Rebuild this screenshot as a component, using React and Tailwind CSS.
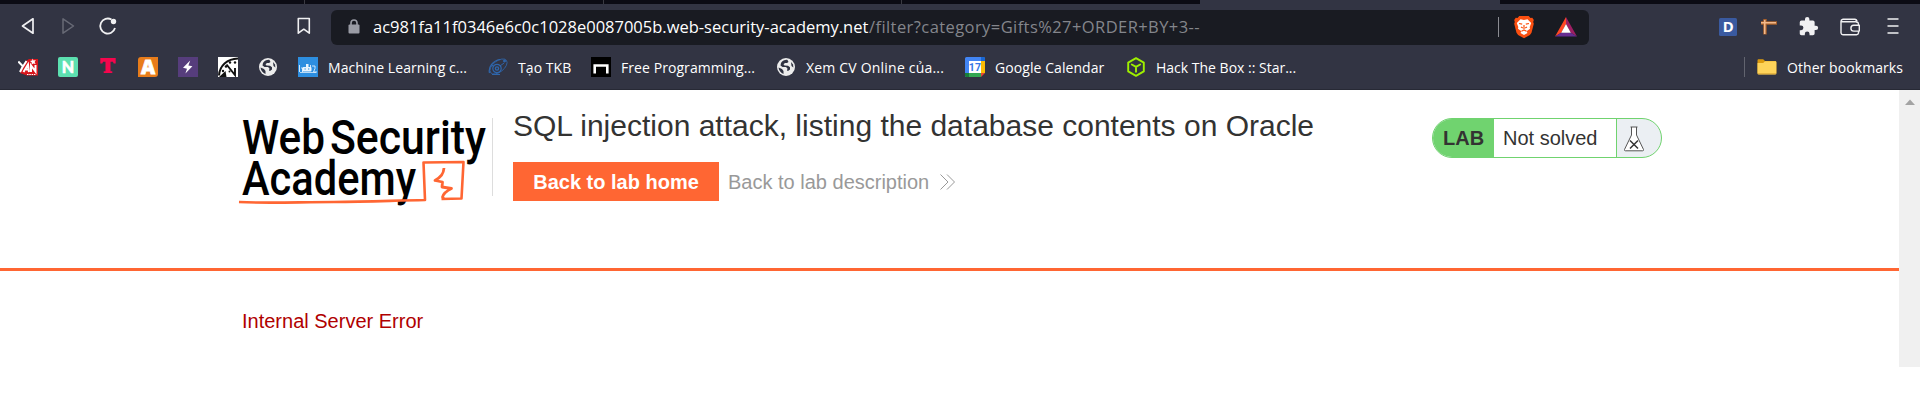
import React from "react";

function Bolt() {
  return (
    <svg viewBox="0 0 20 20" className="size-5 shrink-0">
      <rect width="20" height="20" fill="#563d7c" />
      <path d="M12.2 3.6 5 10.8l4 .9-1.6 4.8 7-7.2-4-.8z" fill="#fff" />
    </svg>
  );
}

function Yan() {
  return (
    <svg viewBox="0 0 20 20" className="size-5 shrink-0">
      <path d="M8 4l3-2h9v16.500H9L2 16l3-7z" fill="#d8161c" />
      <path d="M.3 4.500 5 9.500 8.500 4M5 9l-3 6M5.500 15 10 7.500l1 7.500M8 12.500h3M13 15V8.500l4.500 6V8" stroke="#fff" strokeWidth="2" fill="none" />
      <path d="M14.500 1.500l1 2 2.300-.5-1.200 2 1 2-2.200-.6-1.800 1.200.2-2.200-1.800-1.400 2.200-.4z" fill="#fff" />
      <path d="M9 17.500h9" stroke="#fff" strokeWidth="1" strokeDasharray="1.500 .8" />
    </svg>
  );
}

function LetterN() {
  return (
    <svg viewBox="0 0 20 20" className="size-5 shrink-0">
      <rect width="20" height="20" rx="2" fill="#5ce0b0" />
      <text x="10" y="15.600" textAnchor="middle" fontSize="16" fontWeight="900" fill="#fff" stroke="#fff" strokeWidth=".6" fontFamily="Lato, sans-serif">N</text>
    </svg>
  );
}

function LetterT() {
  return (
    <svg viewBox="0 0 20 20" className="size-5 shrink-0">
      <path d="M2.300 1h15.400v5.600h-2l-.8-1.800h-2.400v9.400h1.800V16H5.700v-1.800h1.800V4.800H5.100l-.8 1.800h-2z" fill="#f5064d" />
    </svg>
  );
}

function LetterA() {
  return (
    <svg viewBox="0 0 20 20" className="size-5 shrink-0">
      <path d="M3 0h17v17a3 3 0 0 1-3 3H0V3a3 3 0 0 1 3-3z" fill="#e87c1a" />
      <text x="10" y="16.600" textAnchor="middle" fontSize="19.500" fontWeight="800" fill="#fff" stroke="#fff" strokeWidth=".8" fontFamily="Open Sans, sans-serif">A</text>
    </svg>
  );
}

function Gauge() {
  return (
    <svg viewBox="0 0 20 20" className="size-5 shrink-0">
      <rect width="20" height="20" fill="#fff" />
      <path d="M1 18.500C1.500 9 9 1.800 20 1.500" fill="none" stroke="#111" strokeWidth="2" />
      <path d="M8.500 7.500 17 18V11" fill="none" stroke="#111" strokeWidth="1.900" />
      <path d="M1 20l6.500-6 1 6z" fill="#111" />
      <circle cx="12" cy="5.500" r="1.200" fill="#111" />
      <circle cx="17" cy="5.500" r="1.200" fill="#111" />
      <circle cx="8" cy="9.500" r="1.300" fill="#111" />
      <circle cx="5" cy="14" r="1.200" fill="#111" />
      <circle cx="11.500" cy="14.500" r="1" fill="#111" />
    </svg>
  );
}

function Globe() {
  return (
    <svg viewBox="0 0 20 20" className="size-5 shrink-0">
      <circle cx="10" cy="10" r="9" fill="#ececec" />
      <path d="M11.500 3c-2-.6-5 .8-6.500 3l-.5 2.500 2 1.500h3.500l1.500 1.500-.5 2 1 .5 2-1.500v-2.200l-2-1.500-3.500-.3-1-1.300 1.500-1.200h2l1.500-1z" fill="#2f3241" />
      <path d="M2.500 10.500 6 12l1.500 2v3C5 16 2.800 13.500 2.500 10.500z" fill="#2f3241" />
      <path d="M15 5l2 2.500.4 3L15.500 9z" fill="#2f3241" />
    </svg>
  );
}

function Course() {
  return (
    <svg viewBox="0 0 20 20" className="size-5 shrink-0">
      <rect width="20" height="20" fill="#2d8ee0" />
      <path d="M1.500 8v7M3 11h1.500v4M12.500 8v4M14 9h3v2.500l-1.500 3.500H19" stroke="#cfe6fa" strokeWidth="1" fill="none" />
      <rect x="4.500" y="10" width="9" height="4.500" rx="1" fill="#e9f4fd" />
      <path d="M8 7h2.500v3H8zM2 15h16v.8H2z" fill="#e9f4fd" />
      <path d="M6.500 12h1.300M10 12h1.300" stroke="#2d8ee0" strokeWidth="1.200" />
    </svg>
  );
}

function Orbit() {
  return (
    <svg viewBox="0 0 20 20" className="size-5 shrink-0" fill="none" stroke="#2f66ab">
      <ellipse cx="10.500" cy="9.500" rx="10" ry="5.500" transform="rotate(-38 10.500 9.500)" strokeWidth=".8" />
      <path d="M1.500 16C0 10 5 3.500 12 2.500" strokeWidth="1.200" />
      <circle cx="9" cy="11.500" r="4.200" strokeWidth="1.200" />
      <circle cx="9" cy="11.500" r="1.600" strokeWidth="1.400" />
      <circle cx="16.500" cy="4" r="1" fill="#2f66ab" />
      <path d="M4 17.500h8M3.500 8l2.500 1.500M12 9l4-3" strokeWidth="1" />
    </svg>
  );
}

function Bench() {
  return (
    <svg viewBox="0 0 20 20" className="size-5 shrink-0">
      <rect width="20" height="20" fill="#000" />
      <path d="M3.700 16.500V8.500h12.600v8" fill="none" stroke="#fff" strokeWidth="2.600" />
    </svg>
  );
}

function Calendar() {
  return (
    <svg viewBox="0 0 20 20" className="size-5 shrink-0">
      <path d="M1.500 0h17A1.500 1.500 0 0 1 20 1.500V4H4v16H1.500A1.500 1.500 0 0 1 0 18.500v-17A1.500 1.500 0 0 1 1.500 0z" fill="#4285f4" />
      <path d="M16 0h2.500A1.500 1.500 0 0 1 20 1.500V4h-4z" fill="#1967d2" />
      <path d="M16 4h4v12h-4z" fill="#fbbc04" />
      <path d="M4 16h12v4H4z" fill="#34a853" />
      <path d="M0 16h4v4H1.500A1.500 1.500 0 0 1 0 18.500z" fill="#188038" />
      <path d="M16 16h4l-4 4z" fill="#ea4335" />
      <path d="M4 4h12v12H4z" fill="#fff" />
      <text x="9.900" y="14" textAnchor="middle" fontSize="10.500" fontWeight="700" fill="#3578e5" fontFamily="Roboto, sans-serif">17</text>
    </svg>
  );
}

function Cube() {
  return (
    <svg viewBox="0 0 20 20" className="size-5 shrink-0" fill="none" stroke="#9fef00" strokeWidth="1.900" strokeLinejoin="round" strokeLinecap="round">
      <path d="M10 1.200 17.800 5.600v8.800L10 18.800l-7.800-4.400V5.600z" />
      <path d="M5.800 7.500 10 9.900l4.200-2.400M10 9.900v4.900" />
    </svg>
  );
}

function Folder() {
  return (
    <svg viewBox="0 0 20 20" className="size-5 shrink-0">
      <path d="M.5 3.500c0-.8.500-1.300 1.300-1.300h4.400L8 4h10c.8 0 1.300.5 1.300 1.300V16H.5z" fill="#dc9a0f" />
      <path d="M.5 6h5.700L8 4.300h10.200c.7 0 1.200.5 1.200 1.200v10.700c0 .7-.5 1.200-1.200 1.200H1.700c-.7 0-1.200-.5-1.200-1.200z" fill="#fed35a" />
      <path d="M.7 16.800h18.500" stroke="#d9a536" strokeWidth="1" />
    </svg>
  );
}

const bookmarks = [
  { icon: Yan }, { icon: LetterN }, { icon: LetterT }, { icon: LetterA },
  { icon: Bolt }, { icon: Gauge }, { icon: Globe },
  { icon: Course, label: "Machine Learning c...", cls: "w-[140px]" },
  { icon: Orbit, label: "Tạo TKB", cls: "w-[53px]" },
  { icon: Bench, label: "Free Programming...", cls: "w-[135px]" },
  { icon: Globe, label: "Xem CV Online của...", cls: "w-[139px] tracking-[0.2px]" },
  { icon: Calendar, label: "Google Calendar", cls: "w-[111px]" },
  { icon: Cube, label: "Hack The Box :: Star...", cls: "w-[142px] tracking-normal" },
];

function TabStrip() {
  return (
    <div className="flex h-1 shrink-0">
      <div className="w-[304px] bg-[#0b0b14]" />
      <div className="w-[299px] border-l border-[#3a3a42] bg-[#0b0b14]" />
      <div className="w-[298px] border-l border-[#3a3a42] bg-[#0b0b14]" />
      <div className="w-[299px] border-l border-[#3a3a42] bg-[#0b0b14]" />
      <div className="w-[300px]" />
      <div className="grow bg-[#0b0b14]" />
    </div>
  );
}

function AddressBar() {
  return (
    <div className="ml-[18px] flex h-[35px] w-[1258px] items-center rounded-md bg-[#191b22]">
      <svg viewBox="0 0 12 16" className="ml-[17px] h-4 w-3"><rect x=".5" y="5.500" width="11" height="9" rx="1" fill="#9a9ca5" /><path d="M3 6V4a3 3 0 0 1 6 0v2" fill="none" stroke="#9a9ca5" strokeWidth="1.600" /></svg>
      <div className="ml-[13px] flex w-[1125px] text-[16.5px] whitespace-pre">
        <span className="w-[496px]">ac981fa11f0346e6c0c1028e0087005b.web-security-academy.net</span>
        <span className="tracking-[0.42px] text-[#84868c]">/filter?category=Gifts%27+ORDER+BY+3--</span>
      </div>
      <div className="h-[20px] w-px bg-[#8b8c92]" />
      <svg viewBox="0 0 22 24" className="ml-[14px] h-6 w-[22px]">
        <path d="M6.300 1h9.400l1.800 2 1.800-.2 1.500 2.200-.6 2 .6 1.700-2.300 9.100-1.600 2.200L11 23.300 5.100 20l-1.600-2.200L1.200 8.700 1.800 7l-.6-2 1.500-2.200 1.800.2z" fill="#fb4f10" />
        <path d="M11 5l3.500-.7 3.700 3.700-1.500 4 .3 1.800-3.400 2.400L14.500 18 11 20l-3.500-2 .9-1.800L5 13.800l.3-1.800-1.500-4L7.500 4.300z" fill="#fff" />
        <path d="M6 8.500l3.200.7M16 8.500l-3.200.7M8 12l1.800 1M14 12l-1.800 1M8.500 16.300 11 15l2.500 1.300M11 10v4" stroke="#fb4f10" strokeWidth="1.200" fill="none" />
      </svg>
      <svg viewBox="0 0 22 20" className="ml-5 h-5 w-[22px]">
        <path d="M11 0 0 19.500l6.500-4L11 7z" fill="#ff4724" />
        <path d="M11 0l11 19.500-6.500-4L11 7z" fill="#9e1f63" />
        <path d="M0 19.500h22l-6.500-4h-9z" fill="#662d91" />
        <path d="M11 7l4.800 8.700H6.200z" fill="#fff" />
      </svg>
    </div>
  );
}

function Browser() {
  return (
    <header className="flex h-[90px] flex-col border-b border-[#272935] bg-[#323443] font-['Open_Sans','Noto_Sans',sans-serif] text-white">
      <TabStrip />
      <div className="flex h-[45px] shrink-0 items-center pt-px">
        <svg viewBox="0 0 20 20" className="-mt-0.5 ml-[18px] size-5" fill="none" stroke="#f0f0f2" strokeWidth="1.700" strokeLinejoin="round"><path d="M15 2.800v14.400L4.500 10z" /></svg>
        <svg viewBox="0 0 20 20" className="-mt-0.5 ml-5 size-5" fill="none" stroke="#686a76" strokeWidth="1.500" strokeLinejoin="round"><path d="M5 2.800v14.400L15.500 10z" /></svg>
        <svg viewBox="0 0 20 20" className="-mt-0.5 ml-5 size-5" fill="none" stroke="#f0f0f2" strokeWidth="1.800"><path d="M13.500 3.500A7.500 7.500 0 1 0 17 12" /><circle cx="15.500" cy="5.500" r="2.700" fill="#f0f0f2" stroke="none" /></svg>
        <svg viewBox="0 0 20 20" className="-mt-0.5 ml-[175px] size-5" fill="none" stroke="#f0f0f2" strokeWidth="1.600" strokeLinejoin="round"><path d="M5.300 2.500h11v14.700l-5.500-4-5.500 4z" /></svg>
        <AddressBar />
        <svg viewBox="0 0 18 18" className="ml-[130px] size-[18px]"><rect width="18" height="18" rx="1.500" fill="#3a5aa0" /><text x="9.200" y="14.300" textAnchor="middle" fontSize="15" fontWeight="700" fill="#fff" fontFamily="Noto Sans, sans-serif">D</text></svg>
        <svg viewBox="0 0 18 18" className="ml-[22px] size-[18px]"><path d="M2 5h16M6 1v15.500" stroke="#a9602a" strokeWidth="3.400" /><path d="M2 4.700h15M5.700 2v14" stroke="#f3b98a" strokeWidth="1.600" /></svg>
        <svg viewBox="0 0 24 24" className="-mt-0.5 ml-[21px] size-[21px]" fill="#f0f0f2"><path d="M20.500 11H19V7a2 2 0 0 0-2-2h-4V3.500a2.500 2.500 0 0 0-5 0V5H4a2 2 0 0 0-2 2v3.800h1.500a2.700 2.700 0 0 1 0 5.400H2V20c0 1.100.9 2 2 2h3.800v-1.500a2.700 2.700 0 0 1 5.400 0V22H17a2 2 0 0 0 2-2v-4h1.500a2.500 2.500 0 0 0 0-5z" /></svg>
        <svg viewBox="0 0 20 18" className="ml-[21px] h-[18px] w-5" fill="none" stroke="#f0f0f2" strokeWidth="1.400" strokeLinejoin="round"><path d="M17 5V4a1.500 1.500 0 0 0-1.500-1.500M1 4V15A2 2 0 0 0 3 16.700h13.500a2 2 0 0 0 2-1.700v-2M1 4A2.500 2.500 0 0 1 3 1.200h12a2.500 2.500 0 0 1 2 2M1 3.800h15.500a2.500 2.500 0 0 1 2 2.500v1M19.300 7.300h-5.500a2.900 2.900 0 0 0 0 5.800h5.500z" /></svg>
        <svg viewBox="0 0 12 18" className="-mt-0.5 ml-[27px] h-[18px] w-3" stroke="#f0f0f2" strokeWidth="1.600"><path d="M.5 2h11M.5 9h11M.5 16h11" /></svg>
      </div>
      <nav className="flex h-[36px] shrink-0 items-center gap-5 pl-[18px] text-[14px] tracking-[0.07px] whitespace-nowrap">
        {bookmarks.map((b, i) => (
          <div key={i} className="flex items-center gap-2.5">
            <b.icon />
            {b.label && <span className={b.cls}>{b.label}</span>}
          </div>
        ))}
        <div className="ml-auto flex items-center pr-[17px]">
          <div className="h-5 w-px bg-[#62646f]" />
          <span className="ml-3"><Folder /></span>
          <span className="ml-2.5 w-[116px]">Other bookmarks</span>
        </div>
      </nav>
    </header>
  );
}

function AcademyLogo() {
  return (
    <svg viewBox="0 0 252 96" className="mt-[22px] h-24 w-[252px] shrink-0">
      <g fill="#000" fontFamily="Roboto, sans-serif" fontWeight="500" fontSize="48">
        <text x="4" y="42" textLength="83" lengthAdjust="spacingAndGlyphs">Web</text>
        <text x="92" y="42" textLength="156" lengthAdjust="spacingAndGlyphs">Security</text>
        <text x="4" y="83" textLength="174" lengthAdjust="spacingAndGlyphs">Academy</text>
      </g>
      <g fill="none" stroke="#ff6633" strokeLinejoin="round">
        <path d="M1 90c30 1.500 60 0 95 0s60-1.500 91-2l-1.500-37.500 40-.5-2 36.500-20 .5" strokeWidth="2.600" />
        <path d="M206 56c-.5 6-3 9-9 12.500l7.500 1.500-.5 5 9.500 1.500c-4 2-8 4-9 8.500l1.500 2" strokeWidth="2.800" />
      </g>
    </svg>
  );
}

function LabStatus() {
  return (
    <div className="mt-7 flex h-10 w-[230px] overflow-hidden rounded-full border border-[#70d36f] bg-[#ebeff3] text-xl text-[#333332]">
      <div className="flex w-[61px] items-center bg-[#70d36f] pl-2.5 font-bold">LAB</div>
      <div className="flex w-[123px] items-center border-r border-[#70d36f] bg-white pl-[9px]">Not solved</div>
      <svg viewBox="0 0 22 26" className="mt-[7px] ml-[6px] h-[26px] w-[22px]"><path d="M7.500 1h7M8.500 1v8L1.500 23.500q-.3 1.300 1 1.300h17q1.300 0 1-1.300L13.500 9V1" fill="#fff" stroke="#555" strokeWidth="1" /><path d="M7 14.500l8 8M15 14.500l-8 8" stroke="#333" strokeWidth="1.500" /></svg>
    </div>
  );
}

export default function App() {
  return (
    <div className="h-[405px] overflow-hidden bg-white font-['Liberation_Sans',Arial,sans-serif]">
      <Browser />
      <div className="flex h-[277px]">
        <main className="flex grow flex-col">
          <section className="flex h-[181px] items-start border-b-[3px] border-[#ff6633] pl-[238px]">
            <AcademyLogo />
            <div className="mt-[28px] ml-[2px] h-[78px] w-px bg-[#dddddd]" />
            <div className="mt-[18px] ml-5 w-[919px]">
              <h1 className="text-[30px] leading-9 text-[#333332]">SQL injection attack, listing the database contents on Oracle</h1>
              <div className="mt-[18px] flex items-center text-xl">
                <span className="flex h-[39px] w-[206px] items-center justify-center bg-[#ff6633] font-bold text-white">Back to lab home</span>
                <span className="ml-[9px] text-[#999999]">Back to lab description</span>
                <svg viewBox="0 0 16 16" className="ml-[11px] size-4" fill="none" stroke="#999999" strokeWidth="1"><path d="M.5.500 8 8 .5 15.500M7 .5 14.500 8 7 15.500" /></svg>
              </div>
            </div>
            <LabStatus />
          </section>
          <p className="mt-[36px] pl-[242px] text-xl text-[#b00000]">Internal Server Error</p>
        </main>
        <aside className="flex w-[21px] justify-center bg-[#f0f0f0] pt-[9px]">
          <svg viewBox="0 0 10 6" className="h-1.5 w-2.5"><path d="M0 6 5 .5 10 6z" fill="#a3a3a3" /></svg>
        </aside>
      </div>
    </div>
  );
}
